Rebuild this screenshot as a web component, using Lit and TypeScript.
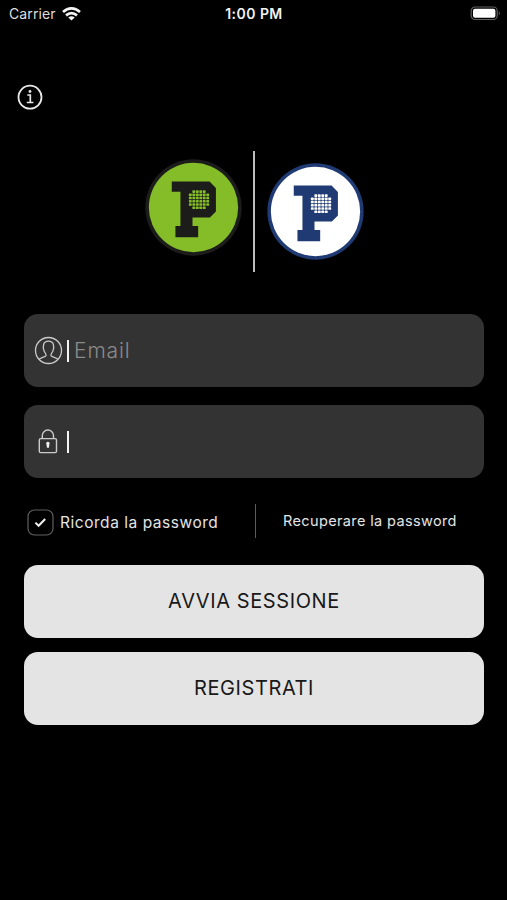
import { LitElement, html, svg, css } from "lit";
import { customElement, property } from "lit/decorators.js";

@customElement("club-logo")
class ClubLogo extends LitElement {
  @property() ink = "#1c1d1b";
  @property() fill = "#84bd27";
  static styles = css`
    :host { display: block; width: 97px; height: 97px; }
    svg { display: block; width: 97px; height: 97px; }
  `;
  render() {
    const cells = [];
    for (let r = 0; r < 6; r++)
      for (let c = 0; c < 6; c++) {
        if ((r === 0 || r === 5) && (c === 0 || c === 5)) continue;
        cells.push(svg`<rect x=${131.2 + c * 10.4} y=${93.5 + r * 9.7} width="8.6" height="7.8" rx="2" fill=${this.fill}></rect>`);
      }
    return html`<svg viewBox="0 0 290 290">
      <circle cx="145" cy="145" r="144" fill=${this.ink}></circle>
      <circle cx="145" cy="145" r="133.5" fill=${this.fill}></circle>
      <path d="M80 67H193L212 87V157L194 175H142V200H159V234H91V200H106V98H80Z" fill=${this.ink}></path>
      ${cells}
    </svg>`;
  }
}

@customElement("app-root")
class AppRoot extends LitElement {
  static styles = css`
    :host { display: block; width: 507px; height: 900px; background: #000; color: #e4e4e4; font-family: Inter, "Liberation Sans", sans-serif; overflow: hidden; }
    * { box-sizing: border-box; }
    svg { display: block; flex: none; }
    span { white-space: nowrap; }
    .status { display: grid; grid-template-columns: 1fr auto 1fr; align-items: center; height: 27px; padding: 0 5px 0 9px; font-size: 14px; }
    .carrier { display: flex; align-items: center; gap: 6px; color: #dedede; letter-spacing: 0.1px; }
    .time { font-weight: 600; font-size: 14px; color: #f2f2f2; letter-spacing: 0.45px; margin-right: 3px; }
    .battery { justify-self: end; }
    .info { padding: 57px 0 0 17px; height: 124px; }
    .logos { display: flex; height: 121px; padding-left: 145px; }
    .green { margin-top: 8px; }
    .blue { margin-top: 12px; }
    .bar { width: 2px; height: 121px; margin: 0 12px 0 11px; background: #bdbdbd; }
    .form { display: flex; flex-direction: column; padding: 42px 23px 0 24px; }
    .field { display: flex; align-items: center; height: 73px; border-radius: 14px; background: #333; padding-left: 10px; }
    .field + .field { margin-top: 18px; }
    .caret { width: 2px; height: 22px; background: #f4f4f4; margin-left: 4px; }
    .hint { color: #8b8b8b; font-size: 21px; font-weight: 300; margin-left: 5px; letter-spacing: 0.9px; padding-bottom: 1px; }
    .options { display: flex; align-items: center; height: 34px; margin-top: 26px; padding-left: 3px; }
    .remember { display: flex; align-items: center; width: 228px; gap: 6px; font-size: 15.5px; letter-spacing: 0.53px; padding-top: 2px; }
    .rule { width: 1px; height: 34px; background: #5b5b5b; }
    .recover { font-size: 14.5px; margin-left: 27px; letter-spacing: 0.37px; padding-bottom: 2px; }
    .button { display: flex; align-items: center; justify-content: center; height: 73px; border-radius: 14px; background: #e4e4e4; color: #191919; font-size: 20px; font-weight: 400; letter-spacing: 0.6px; padding-bottom: 2px; }
    .login { margin-top: 27px; }
    .register { margin-top: 14px; }
  `;
  render() {
    return html`
      <div class="status">
        <div class="carrier"><span>Carrier</span>
          <svg width="19" height="14" viewBox="0 0 19 14" fill="none" stroke="#f4f4f4" stroke-width="2.7">
            <path d="M1 5.1Q9.5 -2.3 18 5.1M4 8.4Q9.5 3.7 15 8.4"></path>
            <path d="M6.3 10.6Q9.5 8 12.7 10.6L9.5 13.6Z" fill="#f4f4f4" stroke="none"></path>
          </svg></div>
        <span class="time">1:00 PM</span>
        <svg class="battery" width="32" height="15" viewBox="0 0 32 15">
          <rect x="1.2" y="1" width="26" height="12.5" rx="3.8" fill="none" stroke="#606060" stroke-width="1.2"></rect>
          <rect x="3" y="2.8" width="22.4" height="9" rx="2" fill="#fff"></rect>
          <path d="M28.8 5.2Q31 7.2 28.8 9.4Z" fill="#606060"></path>
        </svg>
      </div>
      <div class="info">
        <svg width="26" height="26" viewBox="0 0 26 26" fill="none" stroke="#e8e8e8">
          <circle cx="13" cy="13.2" r="11.5" stroke-width="1.8"></circle>
          <path d="M10.3 11H13.3V18.3M9.8 18.5H16.4" stroke-width="1.7"></path>
          <circle cx="13" cy="7.5" r="1.4" fill="#e8e8e8" stroke="none"></circle>
        </svg>
      </div>
      <div class="logos">
        <club-logo class="green"></club-logo>
        <div class="bar"></div>
        <club-logo class="blue" ink="#203a73" fill="#ffffff"></club-logo>
      </div>
      <div class="form">
        <div class="field">
          <svg width="29" height="29" viewBox="0 0 29 29" fill="none" stroke="#cbcbcb" stroke-width="1.3">
            <circle cx="14.5" cy="14.5" r="13"></circle>
            <path d="M5 23.5C6.2 21.6 11 21.2 12 19.6C12.5 18.3 11.2 17.3 10.2 15.2C8.4 10.5 9 5.2 14.5 5.2S20.6 10.5 18.8 15.2C17.8 17.3 16.5 18.3 17 19.6C18 21.2 22.8 21.6 24 23.5"></path>
          </svg>
          <div class="caret"></div><span class="hint">Email</span>
        </div>
        <div class="field">
          <svg width="29" height="29" viewBox="0 0 29 29" fill="none" stroke="#cbcbcb" stroke-width="1.4">
            <rect x="5.3" y="11.6" width="17.2" height="14" rx="1.4"></rect>
            <path d="M8.3 11.5V8.6A5.6 5.6 0 0 1 19.5 8.6V11.5"></path>
            <path d="M12.4 17.2A1.7 1.7 0 1 1 15.4 17.2L14.9 20.8H13Z" fill="#f0f0f0" stroke="none"></path>
          </svg>
          <div class="caret"></div>
        </div>
        <div class="options">
          <div class="remember">
            <svg width="27" height="27" viewBox="0 0 27 27" fill="none">
              <rect x="1" y="1" width="25" height="25" rx="6.5" stroke="#606060" stroke-width="1.2"></rect>
              <path d="M8.4 13.6L11.6 16.8L18.2 10" stroke="#f0f0f0" stroke-width="2"></path>
            </svg>
            <span>Ricorda la password</span>
          </div>
          <div class="rule"></div>
          <span class="recover">Recuperare la password</span>
        </div>
        <div class="button login"><span>AVVIA SESSIONE</span></div>
        <div class="button register"><span>REGISTRATI</span></div>
      </div>`;
  }
}
